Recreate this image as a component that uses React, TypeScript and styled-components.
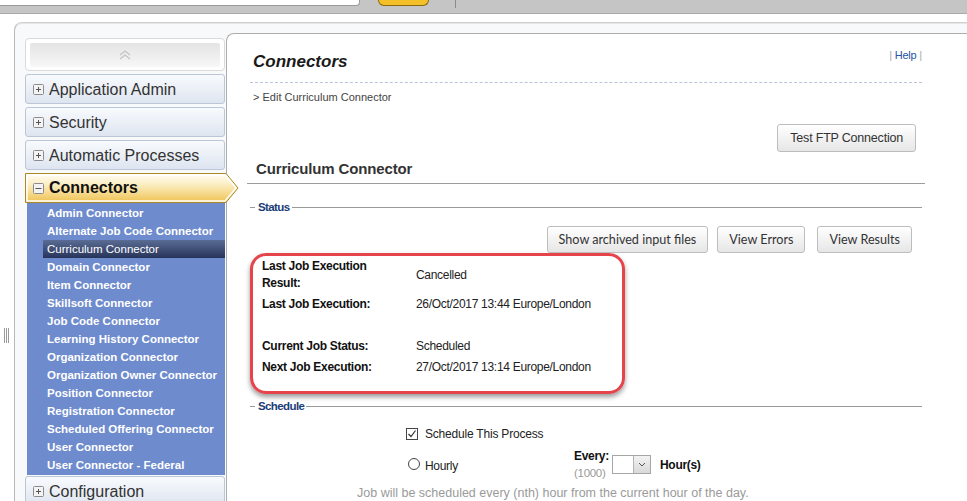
import React from 'react';
import styled, { createGlobalStyle } from 'styled-components';

const GlobalStyle = createGlobalStyle`
  html, body {
    margin: 0;
    padding: 0;
    overflow: hidden;
    background: #ffffff;
  }
  body {
    font-family: "Liberation Sans", Arial, sans-serif;
    color: #222;
  }
`;

const connectors = [
  'Admin Connector',
  'Alternate Job Code Connector',
  'Curriculum Connector',
  'Domain Connector',
  'Item Connector',
  'Skillsoft Connector',
  'Job Code Connector',
  'Learning History Connector',
  'Organization Connector',
  'Organization Owner Connector',
  'Position Connector',
  'Registration Connector',
  'Scheduled Offering Connector',
  'User Connector',
  'User Connector - Federal',
];

const BoxIcon = ({ minus }: { minus?: boolean }) => (
  <svg width="11" height="11" viewBox="0 0 11 11">
    <rect x="0.5" y="0.5" width="10" height="10" rx="1" fill="#f3f3f3" stroke="#8c8c8c" />
    <path d={minus ? 'M2.5 5.5h6' : 'M3 5.5h5M5.5 3v5'} stroke="#555" strokeWidth="1" />
  </svg>
);

function App() {
  return (
    <>
      <GlobalStyle />
      <TopBar>
        <SearchBox />
        <GoButton />
        <BarDivider />
      </TopBar>
      <Body>
        <Gutter>
          <Grip>
            <span />
            <span />
            <span />
          </Grip>
        </Gutter>
        <Frame>
          <Sidebar>
            <SideTop>
              <CollapseButton>
                <svg width="14" height="10" viewBox="0 0 14 10">
                  <path d="M2 5l5-4 5 4M2 9l5-4 5 4" fill="none" stroke="#c4c4c4" strokeWidth="1.3" />
                </svg>
              </CollapseButton>
            </SideTop>
            <MenuItem>
              <BoxIcon />
              Application Admin
            </MenuItem>
            <MenuItem>
              <BoxIcon />
              Security
            </MenuItem>
            <MenuItem>
              <BoxIcon />
              Automatic Processes
            </MenuItem>
            <div>
              <ActiveItem>
                <ActiveShape width="214" height="30" viewBox="0 0 214 30">
                  <defs>
                    <linearGradient id="gold" x1="0" y1="0" x2="0" y2="1">
                      <stop offset="0" stopColor="#fffdf6" />
                      <stop offset="0.35" stopColor="#fcf0c8" />
                      <stop offset="1" stopColor="#efc250" />
                    </linearGradient>
                  </defs>
                  <path d="M0.5 0.5H201L213 15L201 29.5H0.5Z" fill="url(#gold)" stroke="#a98a26" />
                  <path d="M2 2H200L211 15L200 28H2Z" fill="none" stroke="#ffffff" strokeWidth="1.5" />
                </ActiveShape>
                <BoxIcon minus />
                Connectors
              </ActiveItem>
              <SubMenu>
                {connectors.map((name) => (
                  <SubItem key={name} $selected={name === 'Curriculum Connector'}>
                    {name}
                  </SubItem>
                ))}
              </SubMenu>
            </div>
            <MenuItem>
              <BoxIcon />
              Configuration
            </MenuItem>
          </Sidebar>

          <Main>
            <Header>
              <Title>Connectors</Title>
              <HelpLinks>
                | <a>Help</a> |
              </HelpLinks>
            </Header>
            <Breadcrumb>&gt; Edit Curriculum Connector</Breadcrumb>
            <ButtonRow $right={9} $top={20}>
              <Button $big>Test FTP Connection</Button>
            </ButtonRow>
            <Heading>Curriculum Connector</Heading>

            <Legend>
              <i />
              <span>Status</span>
              <b />
            </Legend>
            <ButtonRow $right={13} $top={12}>
              <Button>Show archived input files</Button>
              <Button $gapLeft={9}>View Errors</Button>
              <Button $gapLeft={12}>View Results</Button>
            </ButtonRow>

            <StatusBox>
              <Label>
                Last Job Execution
                <br />
                Result:
              </Label>
              <Value>Cancelled</Value>
              <Label>Last Job Execution:</Label>
              <Value>26/Oct/2017 13:44 Europe/London</Value>
              <Spacer />
              <Label>Current Job Status:</Label>
              <Value>Scheduled</Value>
              <Label>Next Job Execution:</Label>
              <Value>27/Oct/2017 13:14 Europe/London</Value>
            </StatusBox>

            <Legend $gapTop={5}>
              <i />
              <span>Schedule</span>
              <b />
            </Legend>

            <CheckRow>
              <CheckBox>
                <svg width="10" height="10" viewBox="0 0 10 10">
                  <path d="M1.5 5l2.5 2.5 4.5-6" fill="none" stroke="#333" strokeWidth="1.2" />
                </svg>
              </CheckBox>
              Schedule This Process
            </CheckRow>

            <HourlyRow>
              <HourlyOption>
                <Radio />
                <span>Hourly</span>
              </HourlyOption>
              <EveryStack>
                <strong>Every:</strong>
                <small>(1000)</small>
              </EveryStack>
              <Select>
                <span />
                <em>
                  <svg width="8" height="5" viewBox="0 0 8 5">
                    <path d="M1 1l3 3 3-3" fill="none" stroke="#555" strokeWidth="1" />
                  </svg>
                </em>
              </Select>
              <Unit>Hour(s)</Unit>
            </HourlyRow>

            <Note>Job will be scheduled every (nth) hour from the current hour of the day.</Note>
          </Main>
        </Frame>
      </Body>
    </>
  );
}

const TopBar = styled.div`
  display: flex;
  align-items: flex-start;
  height: 13px;
  background: #c5c5c5;
  border-bottom: 1px solid #a9a9a9;
`;

const SearchBox = styled.div`
  width: 359px;
  height: 5px;
  background: #ffffff;
  border-right: 1px solid #9a9a9a;
  border-bottom: 1px solid #9a9a9a;
  border-radius: 0 0 4px 0;
`;

const GoButton = styled.div`
  margin-left: 18px;
  width: 49px;
  height: 5px;
  background: #f3c02a;
  border: 1px solid #8a6a10;
  border-top: none;
  border-radius: 0 0 6px 6px;
`;

const BarDivider = styled.div`
  margin-left: 26px;
  width: 1px;
  height: 8px;
  background: #8a8a8a;
`;

const Body = styled.div`
  display: flex;
  width: 1000px;
`;

const Gutter = styled.div`
  width: 14px;
  flex: none;
  padding: 314px 0 0 4px;
  box-sizing: border-box;
`;

const Grip = styled.div`
  display: flex;
  gap: 1px;
  height: 15px;
  span {
    width: 1px;
    background: #9a9a9a;
  }
`;

const Frame = styled.div`
  flex: 1;
  display: flex;
  align-items: flex-start;
  gap: 1px;
  margin-top: 8px;
  height: 490px;
  padding: 10px 0 0 10px;
  background: #f8f9fb;
  border-top: 1px solid #cfcfcf;
  border-left: 1px solid #b9b9b9;
  border-radius: 8px 0 0 0;
  box-shadow: inset 0 1px 0 #e6e6e6;
`;

const Sidebar = styled.div`
  width: 200px;
  flex: none;
  margin-top: 5px;
  display: flex;
  flex-direction: column;
  gap: 3px;
`;

const SideTop = styled.div`
  padding: 4px 4px 3px;
  background: #ffffff;
  border: 1px solid #dadada;
  border-radius: 4px;
`;

const CollapseButton = styled.div`
  height: 24px;
  display: flex;
  align-items: center;
  justify-content: center;
  background: linear-gradient(#e4e4e4, #f7f7f7);
  border-radius: 2px;
`;

const MenuItem = styled.div`
  height: 30px;
  box-sizing: border-box;
  display: flex;
  align-items: center;
  gap: 5px;
  padding: 1px 0 0 7px;
  background: linear-gradient(#f8fafd, #dee5f0);
  border: 1px solid #bcc6d9;
  border-radius: 3px;
  font-size: 16px;
  color: #333;
  white-space: nowrap;
`;

const ActiveItem = styled.div`
  position: relative;
  z-index: 2;
  isolation: isolate;
  height: 30px;
  display: flex;
  align-items: center;
  gap: 5px;
  padding-left: 8px;
  font-size: 16px;
  font-weight: bold;
  color: #111;
`;

const ActiveShape = styled.svg`
  position: absolute;
  left: 0;
  top: 0;
  z-index: -1;
`;

const SubMenu = styled.div`
  margin: 0 0 -2px 2px;
  padding: 1px 0 1px;
  background: #6e8bce;
`;

const SubItem = styled.div<{ $selected?: boolean }>`
  height: 18px;
  line-height: 18px;
  margin-left: 16px;
  padding-left: 4px;
  font-size: 11.5px;
  font-weight: ${(p) => (p.$selected ? 'normal' : 'bold')};
  color: #ffffff;
  white-space: nowrap;
  background: ${(p) => (p.$selected ? 'linear-gradient(#5a6c94, #27345a)' : 'transparent')};
`;

const Main = styled.div`
  width: 720px;
  flex: none;
  height: 470px;
  padding-left: 23px;
  background: #ffffff;
  border-top: 1px solid #adadad;
  border-left: 1px solid #adadad;
  border-radius: 8px 0 0 0;
  & > * {
    width: 675px;
    box-sizing: border-box;
  }
`;

const Header = styled.div`
  display: flex;
  justify-content: space-between;
  align-items: flex-start;
  padding: 14px 0 10px 3px;
  border-bottom: 1px dashed #b9c4da;
  && {
    width: 672px;
  }
`;

const Title = styled.h1`
  margin: 4px 0 0;
  font-size: 17px;
  line-height: 20px;
  font-weight: bold;
  font-style: italic;
  color: #1a1a1a;
`;

const HelpLinks = styled.div`
  font-size: 11px;
  line-height: 14px;
  color: #aaaaaa;
  letter-spacing: -0.2px;
  a {
    color: #2553a3;
  }
`;

const Breadcrumb = styled.div`
  margin-top: 7px;
  padding-left: 3px;
  font-size: 11px;
  line-height: 14px;
  color: #444;
`;

const ButtonRow = styled.div<{ $right: number; $top: number }>`
  display: flex;
  justify-content: flex-end;
  margin-top: ${(p) => p.$top}px;
  padding-right: ${(p) => p.$right}px;
`;

const Button = styled.button<{ $big?: boolean; $gapLeft?: number }>`
  height: ${(p) => (p.$big ? 28 : 27)}px;
  margin-left: ${(p) => p.$gapLeft || 0}px;
  padding: 0 ${(p) => (p.$big ? 12 : 11)}px;
  font-family: ${(p) => (p.$big ? '"Liberation Sans", Arial' : 'Lato, "Open Sans"')}, sans-serif;
  font-size: ${(p) => (p.$big ? 12.5 : 12.6)}px;
  letter-spacing: ${(p) => (p.$big ? -0.2 : 0)}px;
  color: #333;
  background: linear-gradient(#ffffff, #e6e6e6);
  border: 1px solid #bdbdbd;
  border-radius: 3px;
`;

const Heading = styled.h2`
  margin: 8px 0 0 -3px;
  padding: 0 0 5px 9px;
  font-size: 15px;
  line-height: 18px;
  font-weight: bold;
  color: #333;
  letter-spacing: -0.15px;
  border-bottom: 1px solid #9c9c9c;
  && {
    width: 678px;
  }
`;

const Legend = styled.div<{ $gapTop?: number }>`
  display: flex;
  align-items: center;
  height: 14px;
  margin-top: ${(p) => p.$gapTop ?? 16}px;
  padding-right: 3px;
  i {
    width: 5px;
    height: 1px;
    background: #9a9a9a;
    margin-right: 3px;
  }
  span {
    font-size: 11.5px;
    font-weight: bold;
    color: #1b3d77;
    letter-spacing: -0.6px;
  }
  b {
    flex: 1;
    height: 1px;
    margin-left: 2px;
    background: #9a9a9a;
  }
`;

const StatusBox = styled.div`
  display: grid;
  grid-template-columns: 154px auto;
  row-gap: 4px;
  align-items: center;
  align-content: start;
  && {
    width: 375px;
  }
  height: 141px;
  padding: 2px 0 0 9px;
  border: 3px solid #e5444b;
  border-radius: 16px;
  box-shadow: 0 3px 5px rgba(0, 0, 0, 0.4);
  font-size: 12px;
  line-height: 17px;
  letter-spacing: -0.3px;
`;

const Label = styled.div`
  font-weight: bold;
  color: #111;
`;

const Value = styled.div`
  color: #222;
`;

const Spacer = styled.div`
  grid-column: 1 / -1;
  height: 17px;
`;

const CheckRow = styled.div`
  display: flex;
  align-items: center;
  gap: 7px;
  margin: 14px 0 0 156px;
  font-size: 12px;
  line-height: 14px;
  letter-spacing: -0.2px;
  color: #222;
  & > div {
    margin-top: -1px;
  }
`;

const CheckBox = styled.div`
  width: 12px;
  height: 12px;
  box-sizing: border-box;
  display: flex;
  align-items: center;
  justify-content: center;
  border: 1px solid #444;
  background: #fff;
`;

const HourlyRow = styled.div`
  display: flex;
  align-items: center;
  margin: 8px 0 0 158px;
  font-size: 12px;
  letter-spacing: -0.3px;
`;

const HourlyOption = styled.div`
  width: 166px;
  display: flex;
  align-items: center;
  gap: 5px;
  span {
    margin-top: 3px;
  }
`;

const Radio = styled.div`
  width: 12px;
  height: 12px;
  margin-bottom: 1px;
  box-sizing: border-box;
  border: 1px solid #444;
  border-radius: 50%;
  background: #fff;
`;

const EveryStack = styled.div`
  width: 38px;
  display: flex;
  flex-direction: column;
  strong {
    font-size: 12px;
    line-height: 15px;
    color: #111;
  }
  small {
    margin-top: 2px;
    font-size: 11.5px;
    line-height: 14px;
    color: #9a9a9a;
  }
`;

const Select = styled.div`
  width: 39px;
  height: 19px;
  box-sizing: border-box;
  display: flex;
  border: 1px solid #a6a6a6;
  background: #fff;
  span {
    flex: 1;
  }
  em {
    width: 16px;
    display: flex;
    align-items: center;
    justify-content: center;
    background: linear-gradient(#f2f2f2, #d9d9d9);
    border-left: 1px solid #b3b3b3;
  }
`;

const Unit = styled.div`
  margin-left: 9px;
  font-weight: bold;
  color: #111;
`;

const Note = styled.div`
  margin: 6px 0 0 107px;
  font-size: 12.5px;
  line-height: 14px;
  color: #9a9a9a;
  white-space: nowrap;
`;

export default App;
